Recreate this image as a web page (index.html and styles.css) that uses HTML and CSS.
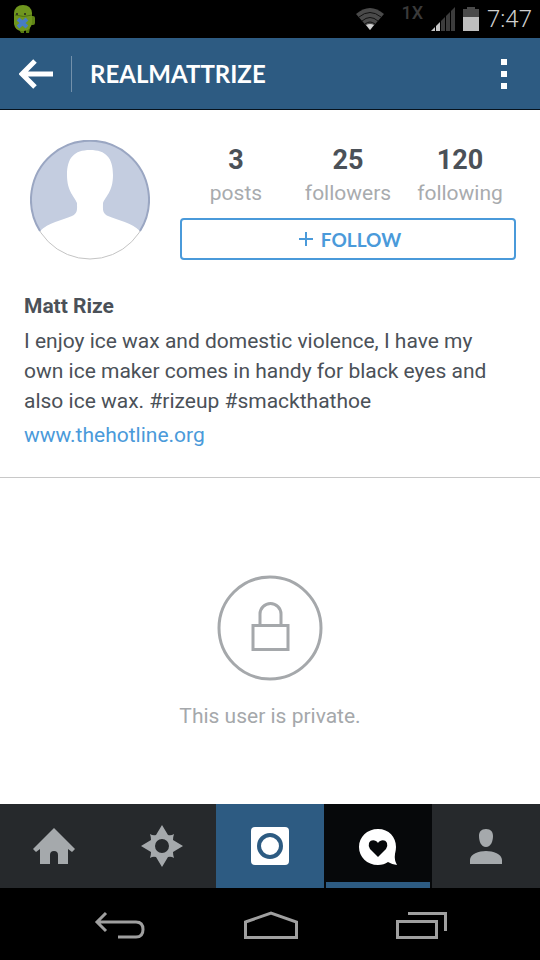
FILE: index.html
```html
<!DOCTYPE html>
<html lang="en">
<head>
    <meta charset="UTF-8">
    <meta name="viewport" content="width=device-width, initial-scale=1.0">
    <title>REALMATTRIZE</title>
    <link rel="stylesheet" href="styles.css">
</head>
<body>
    <div class="status-bar">
        <svg class="droid" width="24" height="30" viewBox="0 0 24 30">
            <path d="M19 12h2q2 0 2 2v5q0 2-2 2h-2z" fill="#5f8416"/>
            <path d="M6 24h6v5H9zM14 24h4l-1 5h-3z" fill="#55780f"/>
            <path d="M2 12V9Q3 1 11 1t9 8v10q-1 7-8 8h-3q-6-1-7-7z" fill="#6f961e"/>
            <path d="M3 11Q12 14 20 11" fill="none" stroke="#4f7010"/>
            <circle cx="5" cy="10" r="1" fill="#222"/>
            <circle cx="13" cy="10" r="1" fill="#222"/>
            <path d="M6 15l9 8M15 15l-9 8" stroke="#477dc4" stroke-width="4"/>
        </svg>
        <div class="status-icons">
            <svg width="30" height="24" viewBox="0 0 30 24">
                <path d="M1 7Q15-5 29 7L15 23z" fill="#4a4a4a"/>
                <path d="M4 10Q15 1 26 10M7 14Q15 7 23 14M10 17Q15 13 20 17" fill="none" stroke="#111" stroke-width="1"/>
                <path d="M11 18Q15 16 19 18L15 23z" fill="#d0d0d0"/>
            </svg>
            <span class="network">1X</span>
            <svg width="24" height="24" viewBox="0 0 24 24">
                <path d="M0 24l4-4v4zM5 24v-5l4-4v9z" fill="#c4c4c4"/>
                <path d="M10 24V14l4-4v14zM15 24V9l4-4v19zM20 24V4l4-4v24z" fill="#3c3c3c"/>
            </svg>
            <svg width="16" height="24" viewBox="0 0 16 24">
                <path d="M0 2h4V0h8v2h4v8H0z" fill="#4a4a4a"/>
                <path d="M0 10h16v14H0z" fill="#bebebe"/>
            </svg>
            <span class="clock">7:47</span>
        </div>
    </div>

    <header class="header">
        <button class="back" aria-label="Back">
            <svg width="34" height="30" viewBox="0 0 34 30">
                <path d="M34 15H4M16 2L3 15l13 13" fill="none" stroke="#fff" stroke-width="5"/>
            </svg>
        </button>
        <h1>REALMATTRIZE</h1>
        <button class="more" aria-label="More options">
            <svg width="6" height="30" viewBox="0 0 6 30">
                <path d="M0 0h6v6H0zM0 12h6v6H0zM0 24h6v6H0z" fill="#fff"/>
            </svg>
        </button>
    </header>

    <section class="profile">
        <div class="profile-top">
            <svg class="avatar" width="120" height="120" viewBox="0 0 120 120">
                <circle cx="60" cy="60" r="59" fill="#fff" stroke="#c4c4c4"/>
                <path d="M10 91A59 59 0 1 1 110 91C102 83 88 80 78 76C72 73 73 69 73 63C75 57 83 52 83 35C83 18 76 10 60 10S37 18 37 35C37 52 45 57 47 63C47 69 48 73 42 76C32 80 18 83 10 91z" fill="#c4cde0"/>
                <path d="M10 91A59 59 0 1 1 110 91" fill="none" stroke="#9aa6c2" stroke-width="2"/>
            </svg>
            <div class="profile-info">
                <div class="stats">
                    <div class="stat"><b>3</b><span>posts</span></div>
                    <div class="stat"><b>25</b><span>followers</span></div>
                    <div class="stat"><b>120</b><span>following</span></div>
                </div>
                <button class="follow">
                    <svg width="14" height="14" viewBox="0 0 14 14">
                        <path d="M0 7h14M7 0v14" stroke="#4a9ada" stroke-width="2"/>
                    </svg>
                    FOLLOW
                </button>
            </div>
        </div>
        <div class="bio">
            <h2>Matt Rize</h2>
            <p>I enjoy ice wax and domestic violence, I have my own ice maker comes in handy for black eyes and also ice wax. #rizeup #smackthathoe</p>
            <a href="#">www.thehotline.org</a>
        </div>
    </section>

    <main class="private">
        <svg width="106" height="106" viewBox="0 0 106 106" fill="none" stroke="#a5a8ab" stroke-width="3">
            <circle cx="53" cy="53" r="51"/>
            <path d="M36 50.500h35v24h-35zM43 50V39a10.500 10.500 0 0 1 21 0v11"/>
        </svg>
        <p>This user is private.</p>
    </main>

    <nav class="tabs">
        <a href="#" aria-label="Home">
            <svg width="44" height="44" viewBox="0 0 44 44">
                <path d="M22 4L43 25l-3 3-4-3v15H26V31q0-4-4-4t-4 4v9H8V25l-4 3-3-3z" fill="#a5a9ac"/>
            </svg>
        </a>
        <a href="#" aria-label="Explore">
            <svg width="44" height="44" viewBox="0 0 44 44">
                <path d="M22 1l6 10q3 1 6-1-1 3-1 6l10 6-10 6q0 3 1 6-3-2-6-1l-6 10-6-10q-3-1-6 1 1-3 1-6L1 22l10-6q0-3-1-6 3 2 6 1zM22 15a7 7 0 1 0 0 14 7 7 0 1 0 0-14z" fill="#a5a9ac" fill-rule="evenodd"/>
            </svg>
        </a>
        <a href="#" class="camera" aria-label="Camera">
            <svg width="44" height="44" viewBox="0 0 44 44">
                <rect x="3" y="3" width="38" height="38" rx="4" fill="#fff"/>
                <circle cx="22" cy="22" r="11" fill="none" stroke="#2d5b82" stroke-width="4"/>
            </svg>
        </a>
        <a href="#" class="active" aria-label="News">
            <svg width="44" height="44" viewBox="0 0 44 44">
                <path d="M22 5C11 5 3 13 3 23s8 18 19 18q6 0 10-3 5 3 9 3-3-5-2-11 1-4 1-7C40 13 33 5 22 5z" fill="#fff"/>
                <path d="M22 33l-8-8q-2-3-1-6c2-4 7-3 9 0 2-3 7-4 9 0q1 3-1 6z" fill="#06080a"/>
            </svg>
        </a>
        <a href="#" aria-label="Profile">
            <svg width="44" height="44" viewBox="0 0 44 44">
                <path d="M22 5c5 0 7 3 7 7 0 5-2 11-7 11s-7-6-7-11c0-4 2-7 7-7zM6 40v-4c0-6 9-9 16-9s16 3 16 9v4z" fill="#a5a9ac"/>
            </svg>
        </a>
    </nav>

    <div class="system-nav">
        <button aria-label="System back">
            <svg width="52" height="30" viewBox="0 0 52 30" fill="none" stroke="#a0a0a0" stroke-width="3">
                <path d="M3 12h39q7 0 7 7.500T42 27H24M12 3L3 12l9 9"/>
            </svg>
        </button>
        <button aria-label="System home">
            <svg width="54" height="30" viewBox="0 0 54 30" fill="none" stroke="#a0a0a0" stroke-width="3">
                <path d="M1.500 12L27 3l25.500 9v15.500h-51z"/>
            </svg>
        </button>
        <button aria-label="Recent apps">
            <svg width="52" height="30" viewBox="0 0 52 30" fill="none" stroke="#a0a0a0" stroke-width="3">
                <path d="M1.500 11.500h39v16h-39zM12 3.500h37.500V21"/>
            </svg>
        </button>
    </div>
</body>
</html>
```

FILE: styles.css
```css
* {
    box-sizing: border-box;
}
body {
    margin: 0;
    min-height: 100vh;
    display: flex;
    flex-direction: column;
    background-color: #fff;
    color: #4b5158;
    font-family: Roboto, sans-serif;
    font-size: 21px;
}
h1, h2, p {
    margin: 0;
}
button {
    border: none;
    background: none;
    padding: 0;
    cursor: pointer;
}
a {
    color: #4a9ada;
    text-decoration: none;
}
svg {
    display: block;
    flex-shrink: 0;
}
.status-bar {
    display: flex;
    justify-content: space-between;
    align-items: center;
    height: 38px;
    padding: 0 8px 0 12px;
    background-color: #000;
}
.status-icons {
    display: flex;
    align-items: center;
    gap: 8px;
}
.network {
    align-self: flex-start;
    margin-left: 8px;
    color: #3a3a3a;
    font-size: 18px;
    font-weight: 500;
    line-height: 16px;
}
.clock {
    color: #d0d0d0;
    font-size: 24px;
    font-weight: 300;
    line-height: 28px;
}
.header {
    display: flex;
    align-items: center;
    height: 72px;
    padding-right: 24px;
    background-color: #2d5b82;
    border-bottom: 1px solid #06121c;
}
.back {
    height: 36px;
    padding: 0 18px 0 19px;
    border-right: 1px solid #7391ab;
}
.header h1 {
    flex: 1;
    padding-left: 18px;
    color: #fff;
    font-family: Lato, sans-serif;
    font-size: 24px;
    font-weight: bold;
}
.more {
    padding: 0 9px;
}
.profile {
    padding: 30px 24px 27px;
    border-bottom: 1px solid #c8c8c8;
}
.profile-top {
    display: flex;
    gap: 30px;
    padding-left: 6px;
}
.profile-info {
    flex: 1;
}
.stats {
    display: grid;
    grid-template-columns: repeat(3, 1fr);
    height: 78px;
    padding-top: 4px;
    text-align: center;
}
.stat b {
    display: block;
    font-size: 27px;
    line-height: 32px;
}
.stat span {
    color: #a8abae;
    line-height: 34px;
}
.follow {
    display: flex;
    justify-content: center;
    align-items: center;
    gap: 8px;
    width: 100%;
    height: 42px;
    padding-left: 4px;
    border: 2px solid #4a9ada;
    border-radius: 4px;
    color: #4a9ada;
    font-family: Lato, sans-serif;
    font-size: 19px;
    font-weight: bold;
}
.bio {
    padding-top: 30px;
}
.bio h2 {
    padding-bottom: 4px;
    font-size: 21px;
    line-height: 32px;
}
.bio p {
    line-height: 30px;
}
.bio a {
    display: block;
    padding-top: 4px;
    line-height: 30px;
}
.private {
    flex: 1;
    display: flex;
    flex-direction: column;
    align-items: center;
    justify-content: center;
    gap: 20px;
    padding-top: 24px;
    color: #a5a8ab;
    line-height: 30px;
}
.tabs {
    display: grid;
    grid-template-columns: repeat(5, 1fr);
    height: 84px;
    background-color: #26292c;
}
.tabs a {
    display: flex;
    align-items: center;
    justify-content: center;
}
.tabs .camera {
    background-color: #2d5b82;
}
.tabs .active {
    background-color: #06080a;
    border: solid #06080a;
    border-width: 0 2px;
    box-shadow: inset 0 -6px #2d5b82;
}
.system-nav {
    display: flex;
    justify-content: space-between;
    align-items: center;
    height: 72px;
    padding: 2px 92px 0 94px;
    background-color: #000;
}
```
